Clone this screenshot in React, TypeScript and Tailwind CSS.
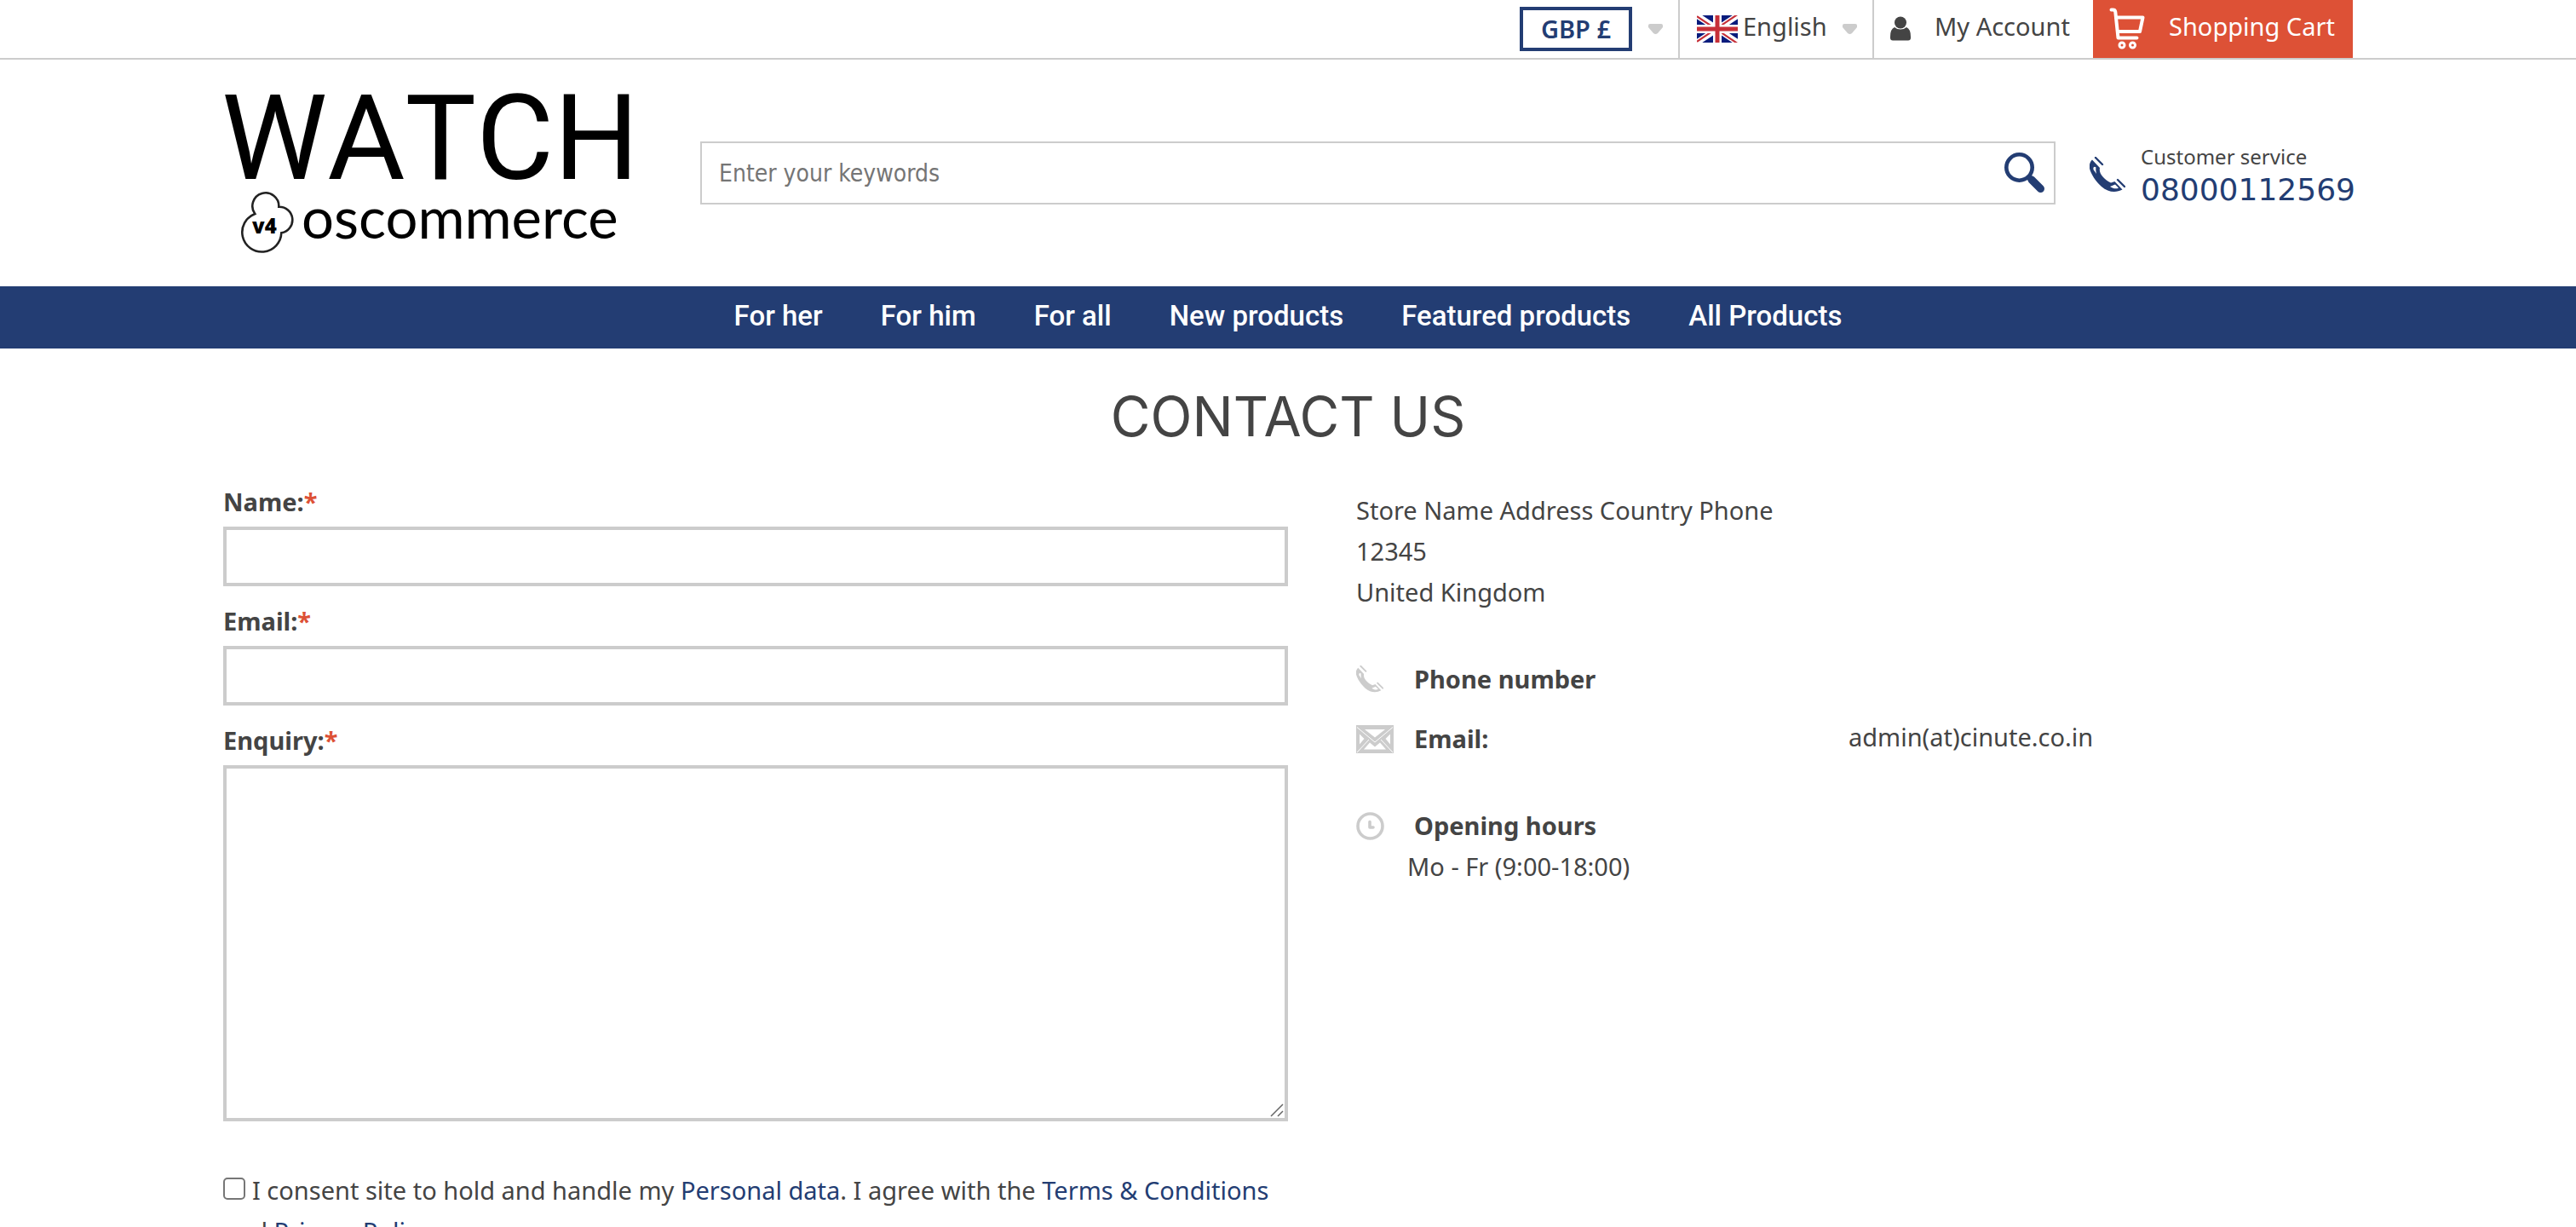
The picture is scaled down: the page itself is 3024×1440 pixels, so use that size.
import React from 'react';

const NAV = ['For her', 'For him', 'For all', 'New products', 'Featured products', 'All Products'];

function Caret() {
  return (
    <svg viewBox="0 0 17 12" className="h-3 w-[17px] shrink-0" aria-hidden="true">
      <path d="M2 0H15Q17 0 17 2V4L11 11Q8.5 13 6 11L0 4V2Q0 0 2 0Z" fill="#ccc" />
    </svg>
  );
}

function Flag() {
  return (
    <svg viewBox="0 0 48 32" className="h-8 w-12 shrink-0" aria-hidden="true">
      <rect width="48" height="32" fill="#0a1c7d" />
      <path d="M0 0L48 32M48 0L0 32" stroke="#fff" strokeWidth="7" />
      <path d="M0 1.2L21 15.2M27 19.2L48 33.2M48 -1.2L27 12.8M21 16.8L0 30.8" stroke="#c62f38" strokeWidth="2.2" />
      <path d="M24 0V32M0 16H48" stroke="#fff" strokeWidth="10" />
      <path d="M24 0V32M0 16H48" stroke="#c62f38" strokeWidth="5" />
    </svg>
  );
}

function UserIcon() {
  return (
    <svg viewBox="0 0 24 30" className="h-[30px] w-6 shrink-0" fill="#444" aria-hidden="true">
      <circle cx="12" cy="7.5" r="7" />
      <path d="M5 13Q8 15.5 12 15.5T19 13Q24 15 24 24V25.500Q24 28.500 21 28.500H3Q0 28.500 0 25.500V24Q0 15 5 13Z" />
    </svg>
  );
}

function CartIcon() {
  return (
    <svg viewBox="0 0 42 50" className="h-[50px] w-[42px] shrink-0" fill="none" stroke="#fff" strokeWidth="4" strokeLinecap="round" strokeLinejoin="round" aria-hidden="true">
      <path d="M2.500 2.500H4.500Q7 2.500 7.300 5L10.500 35.500H32.500" />
      <path d="M8 11.500H39.500L36 28H10" />
      <circle cx="15" cy="44" r="3" strokeWidth="3" />
      <circle cx="27.500" cy="44" r="3" strokeWidth="3" />
    </svg>
  );
}

function SearchIcon() {
  return (
    <svg viewBox="0 0 48 48" className="h-12 w-12" fill="none" stroke="#233d73" aria-hidden="true">
      <circle cx="17.500" cy="17.500" r="15.200" strokeWidth="4.600" />
      <path d="M28 28L31 31" strokeWidth="7" />
      <path d="M32 32L42.500 42.500" strokeWidth="9" strokeLinecap="round" />
    </svg>
  );
}

function PhoneIcon({ className }: { className: string }) {
  return (
    <svg viewBox="0 0 42 42" className={className} fill="currentColor" aria-hidden="true">
      <path
        fillRule="evenodd"
        d="M3 3.500L12 13C10.500 19 16 26 25 30.500L29.500 29L38.500 38.500C31 42.500 22 42 14 35C5 27 -2 14 0 9C.6 6.500 1.700 4.800 3 3.500ZM4.500 15C4 12 5.500 11 7.500 12.500C7 15 7.500 17 8 20ZM24 35L30 32.500L34 36.500C31 38 28 37.500 24 35Z"
      />
      <path d="M7 1L15 9M33 27L41 35" stroke="currentColor" strokeWidth="2.400" strokeLinecap="round" />
    </svg>
  );
}

function MailIcon() {
  return (
    <svg viewBox="0 0 44 33" className="h-[33px] w-11" aria-hidden="true">
      <rect width="44" height="33" fill="#ccc" />
      <path d="M10 5H34L22 14.500Z" fill="#fff" />
      <path d="M4 10.500L9.500 16L4 22.500ZM40 10.500L34.500 16L40 22.500Z" fill="#fff" />
      <path d="M9 28.500L16 20.500L22 25.500L28 20.500L35 28.500Z" fill="#fff" />
      <path d="M1 2.500L22 20L43 2.500M1 32L15 17M43 32L29 17" fill="none" stroke="#fff" strokeWidth="1" />
    </svg>
  );
}

function ClockIcon() {
  return (
    <svg viewBox="0 0 33 33" className="h-[33px] w-[33px]" fill="none" stroke="#ccc" aria-hidden="true">
      <circle cx="16.500" cy="16.500" r="14.500" strokeWidth="3.600" />
      <path d="M16 11.500V18H20" strokeWidth="3.600" strokeLinecap="round" strokeLinejoin="round" />
    </svg>
  );
}

function Logo() {
  return (
    <svg viewBox="0 0 480 186" className="h-[186px] w-[480px] overflow-visible" role="img" aria-label="Watch oscommerce">
      <text x="-2" y="100" className="font-[Roboto,sans-serif] text-[140px] [font-kerning:none]">WATCH</text>
      <path
        d="M37.300 141A15.500 15.500 0 1 1 65.300 132.700A15.400 15.400 0 0 1 68.300 163.300A23 23 0 1 1 37.300 141Z"
        fill="none"
        stroke="#222"
        strokeWidth="2.600"
      />
      <text x="34" y="164" className="font-['Open_Sans',sans-serif] text-[24px] font-extrabold">v4</text>
      <text x="92" y="170" className="font-[Lato,sans-serif] text-[67px]">oscommerce</text>
    </svg>
  );
}

function Label({ htmlFor, children }: { htmlFor: string; children: string }) {
  return (
    <label htmlFor={htmlFor} className="mb-[5px] block font-bold">
      {children}
      <span className="text-[#dd5136]">*</span>
    </label>
  );
}

export default function App() {
  return (
    <div className="min-h-screen bg-white font-['Noto_Sans',sans-serif] text-[29px] leading-[48px] text-[#444]">
      <div className="border-b-2 border-[#ccc]">
        <div className="mx-auto flex h-[68px] w-full max-w-[2500px] items-stretch justify-end leading-[62px]">
          <button className="flex items-center gap-[19px] pr-[18px]">
            <span className="w-[132px] border-4 border-[#233d73] text-center leading-[44px] font-semibold text-[#233d73]">GBP £</span>
            <Caret />
          </button>
          <button className="flex w-[230px] items-center border-x-2 border-[#ccc] pr-[18px] pl-5">
            <Flag />
            <span className="ml-[6px] flex-1 self-start text-left">English</span>
            <Caret />
          </button>
          <a href="#account" className="flex w-[257px] items-center pl-[19px]">
            <UserIcon />
            <span className="ml-[28px] self-start whitespace-nowrap">My Account</span>
          </a>
          <a href="#cart" className="flex w-[305px] items-center bg-[#dd5136] pl-[19px] text-white">
            <CartIcon />
            <span className="ml-[28px] self-start whitespace-nowrap">Shopping Cart</span>
          </a>
        </div>
      </div>

      <header className="mx-auto flex w-full max-w-[2500px] items-center py-10">
        <a href="#home" className="shrink-0 text-black">
          <Logo />
        </a>
        <form className="ml-20 flex h-[74px] flex-1 items-center border-2 border-[#ccc] pr-[10px]">
          <input
            type="text"
            aria-label="Search"
            placeholder="Enter your keywords"
            className="h-full flex-1 pl-5 font-['DejaVu_Sans_Condensed','DejaVu_Sans',sans-serif] text-[28px] outline-none placeholder:text-[#757575]"
          />
          <button type="button" aria-label="Search">
            <SearchIcon />
          </button>
        </form>
        <div className="ml-10 flex items-center gap-[18px] pt-1">
          <PhoneIcon className="h-[42px] w-[42px] text-[#233d73]" />
          <div className="w-[249px] whitespace-nowrap">
            <div className="text-[24px] leading-[36px]">Customer service</div>
            <a href="tel:08000112569" className="block font-['DejaVu_Sans',sans-serif] text-[36px] leading-[42px] text-[#233d73]">
              08000112569
            </a>
          </div>
        </div>
      </header>

      <nav className="flex justify-center gap-[68px] bg-[#233d73] pb-1 font-[Roboto,sans-serif] text-[33px] leading-[69px] font-medium text-white">
        {NAV.map((item) => (
          <a key={item} href="#catalog">
            {item}
          </a>
        ))}
      </nav>

      <main className="mx-auto w-full max-w-[2500px]">
        <h1 className="pt-10 pb-9 text-center font-[Inter,sans-serif] text-[64px] leading-[80px]">CONTACT US</h1>
        <div className="grid grid-cols-2">
          <form>
            <Label htmlFor="name">Name:</Label>
            <input id="name" type="text" className="mb-[17px] block h-[70px] w-full border-4 border-[#ccc] px-4" />
            <Label htmlFor="email">Email:</Label>
            <input id="email" type="email" className="mb-[17px] block h-[70px] w-full border-4 border-[#ccc] px-4" />
            <Label htmlFor="enquiry">Enquiry:</Label>
            <div className="relative">
              <textarea id="enquiry" className="block h-[418px] w-full resize-none border-4 border-[#ccc] px-4" />
              <svg viewBox="0 0 16 16" className="absolute right-[5px] bottom-[5px] h-4 w-4" stroke="#666" strokeWidth="1.500" aria-hidden="true">
                <path d="M1 15L15 1M9 15L15 9" />
              </svg>
            </div>
            <p className="mt-[57px]">
              <input
                id="consent"
                type="checkbox"
                className="mr-2 h-[26px] w-[26px] appearance-none rounded-[5px] border-2 border-[#767676] align-baseline"
              />
              <label htmlFor="consent">I consent site to hold and handle my </label>
              <a href="#personal" className="text-[#233d73]">Personal data</a>. I agree with the{' '}
              <a href="#terms" className="text-[#233d73]">Terms &amp; Conditions</a> and{' '}
              <a href="#privacy" className="text-[#233d73]">Privacy Policy</a>.
            </p>
          </form>

          <div className="pt-[10px] pl-20">
            <address className="not-italic">
              Store Name Address Country Phone
              <br />
              12345
              <br />
              United Kingdom
            </address>
            <div className="mt-[54px] flex items-center">
              <span className="w-[68px]">
                <PhoneIcon className="h-8 w-8 text-[#ccc]" />
              </span>
              <strong>Phone number</strong>
            </div>
            <div className="mt-[22px] flex items-center">
              <span className="w-[68px]">
                <MailIcon />
              </span>
              <strong className="w-[510px]">Email:</strong>
              <a href="mailto:admin(at)cinute.co.in" className="self-start leading-[44px]">
                admin(at)cinute.co.in
              </a>
            </div>
            <div className="mt-[54px] flex items-center">
              <span className="w-[68px]">
                <ClockIcon />
              </span>
              <strong>Opening hours</strong>
            </div>
            <div className="pl-[60px]">Mo - Fr (9:00-18:00)</div>
          </div>
        </div>
      </main>
    </div>
  );
}
